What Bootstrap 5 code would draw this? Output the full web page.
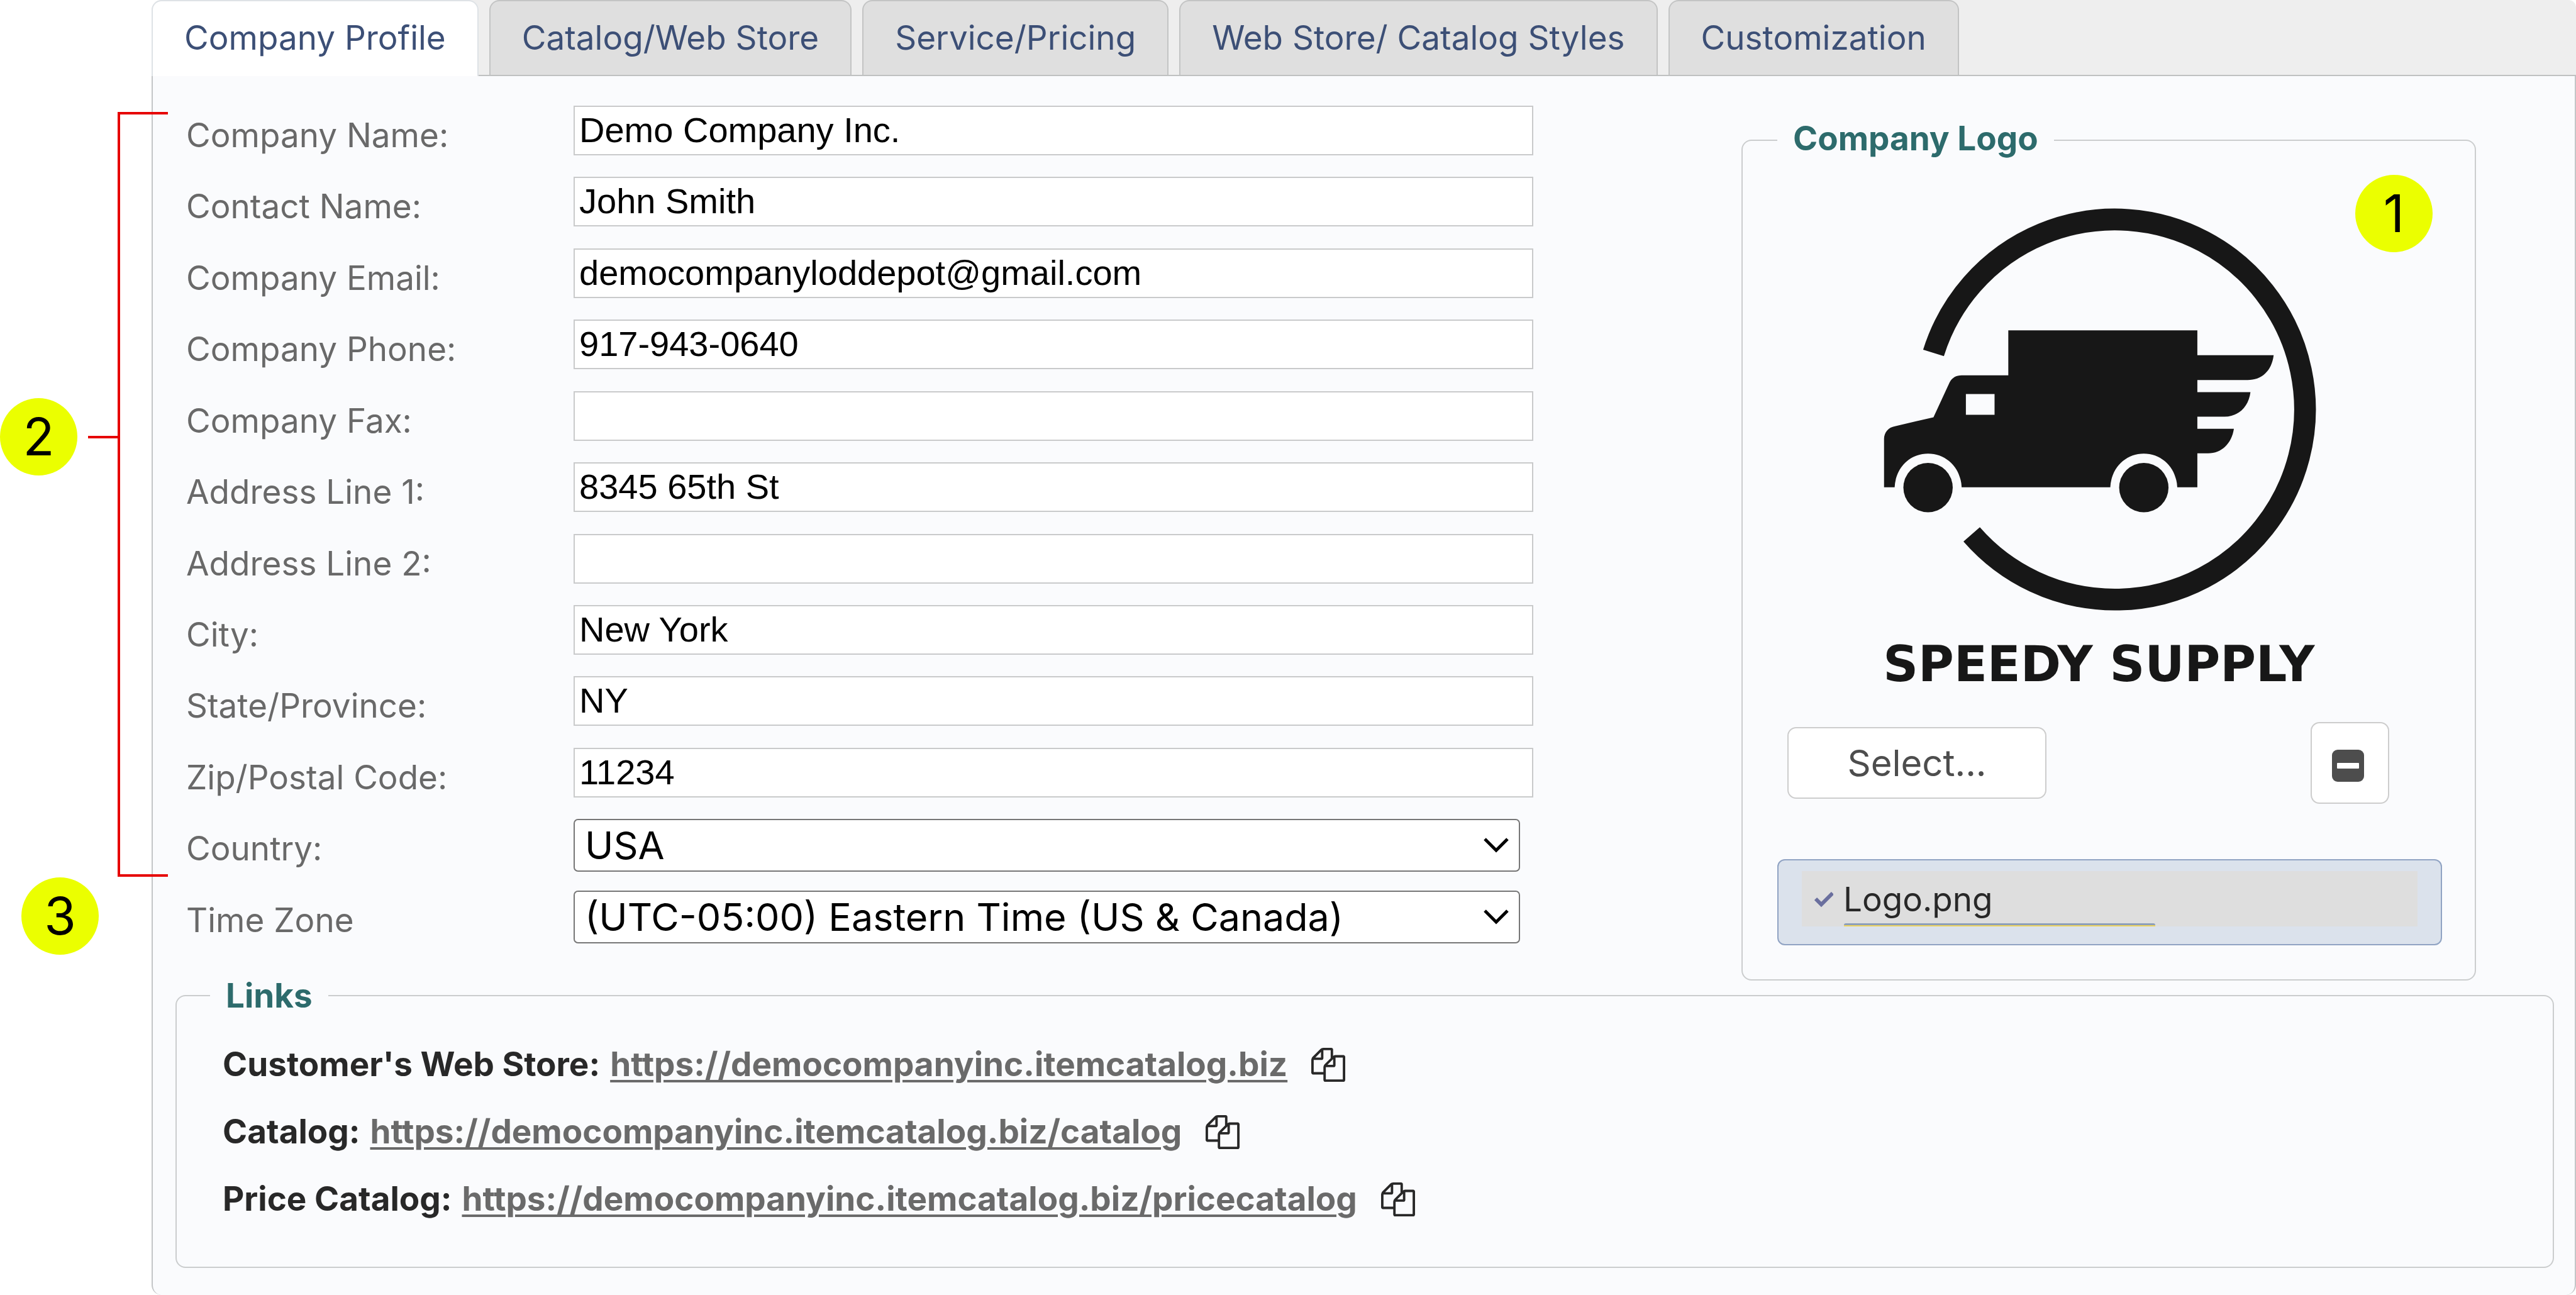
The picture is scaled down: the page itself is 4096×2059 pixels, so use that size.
<!DOCTYPE html>
<html lang="en">
<head>
<meta charset="utf-8">
<meta name="viewport" content="width=device-width, initial-scale=1">
<title>Company Profile</title>
<link href="https://cdn.jsdelivr.net/npm/bootstrap@5.3.0/dist/css/bootstrap.min.css" rel="stylesheet">
<style>
  body { background: #fff; color: #282828; font-family: Inter, "Liberation Sans", sans-serif; font-size: 53px; line-height: 64px; }
  .profile-page { min-height: 100vh; padding-left: 241px; }

  /* tab strip */
  .tab-strip { background: #eee; border-bottom: 2px solid #bfc1c1; border-radius: 16px 12px 0 0; gap: 17px; }
  .tab-strip .nav-link { height: 119px; margin: 0; padding: 26px 50px; border: 2px solid #c3c4c4; border-bottom: 0; border-radius: 16px 16px 0 0; background: #dfdfdf; color: #3c4f76; line-height: 64px; }
  .tab-strip .nav-link.active { height: 123px; margin-bottom: -4px; background: #fff; color: #3c4f76; }

  .profile-panel { background: #fafbfd; border: 2px solid #c3c5c7; border-top: 0; border-bottom: 0; border-radius: 0 0 16px 16px; padding-bottom: 36px; }

  /* form */
  .details-form { padding: 47px 331px 30px 53px; }
  .field-row { flex: 1 1 0; }
  .field-label { width: 616px; padding-top: 15px; color: #696969; line-height: 64px; }
  .field-text { height: 79px; padding: 0 7px 2px; border: 2px solid #c9cacb; border-radius: 0; background: #fff; color: #000; font-family: "Liberation Sans", sans-serif; font-size: 56px; line-height: 64px; }
  .field-pick { height: 84px; margin-right: 21px; padding: 0 80px 0 16px; border: 2px solid #767676; border-radius: 7px; color: #000; font-size: 61px; line-height: 76px;
    background: #fff url("data:image/svg+xml,%3Csvg xmlns='http://www.w3.org/2000/svg' viewBox='0 0 40 24' fill='none' stroke='%23000' stroke-width='5'%3E%3Cpath d='M2 2l18 18L38 2'/%3E%3C/svg%3E") no-repeat right 16px center / 40px 24px; }

  /* framed groups */
  .framed { margin: 0; border: 2px solid #cbcdce; border-radius: 16px; }
  .framed legend { float: none; width: auto; margin: 0; padding: 0 25px; color: #2d6b6c; font-size: 53px; font-weight: 700; line-height: 64px; }

  .logo-column { flex: 0 0 1168px; margin: 67px 157px 0 0; }
  .logo-box { padding: 0 52px 54px 55px; }
  .logo-box legend { padding-bottom: 6px; }
  .logo-art { display: block; width: 729px; height: 794px; margin: 50px auto 46px 145px; }
  .tool-row { padding: 0 84px 0 16px; }
  .tool-btn { background: #fff; border: 2px solid #cdcdcd; border-radius: 14px; color: #4d4d4d; font-size: 58px; line-height: 64px; }
  .tool-btn:hover { background: #f4f4f4; border-color: #bbb; }
  .pick-btn { width: 412px; height: 114px; padding: 0; }
  .drop-btn { width: 125px; height: 130px; padding: 8px 6px 0 0; }
  .file-item { margin-top: 88px; padding: 17px 37px 28px; background: #dbe2ec; border: 2px solid #90a3c3; border-radius: 12px; }
  .file-name { background: #dedede; padding: 13px 0 0 20px; }
  .file-bar { width: 495px; height: 5px; margin: 6px 0 0 47px; border-top: 3px solid #8d9fb9; border-radius: 3px 3px 0 0; background: #edd35f; }

  /* links */
  .links-wrap { margin: -8px 33px 0 36px; }
  .links-box { padding: 0 53px 54px; }
  .links-list { margin: 24px 0 0 20px; font-weight: 700; line-height: 107px; }
  .links-list a { color: #6a6a6a; text-decoration: underline; text-decoration-thickness: 4px; text-underline-offset: 6px; margin-left: 16px; }
  .copy-btn { width: 54px; height: 54px; margin-left: 38px; color: #282828; line-height: 0; }

  /* numbered call-outs */
  .callout-dot { position: absolute; width: 123px; height: 123px; border-radius: 50%; background: #ebff00; color: #000; font-size: 82px; line-height: 123px; text-align: center; }
  .dot-one { top: 90px; right: 69px; }
  .dot-two { top: 633px; left: 0; }
  .dot-three { top: 1395px; left: 34px; }
  .bracket { position: absolute; top: 178px; left: 187px; width: 80px; height: 1216px; border: 4px solid #e60000; border-right: 0; }
  .bracket-tick { position: absolute; top: 693px; left: 140px; width: 48px; height: 4px; background: #e60000; }
</style>
</head>
<body>
<main class="profile-page position-relative d-flex flex-column">
  <ul class="nav nav-tabs tab-strip flex-nowrap">
    <li class="nav-item"><a class="nav-link active" aria-current="page" href="#profile">Company Profile</a></li>
    <li class="nav-item"><a class="nav-link" href="#catalog">Catalog/Web Store</a></li>
    <li class="nav-item"><a class="nav-link" href="#service">Service/Pricing</a></li>
    <li class="nav-item"><a class="nav-link" href="#styles">Web Store/ Catalog Styles</a></li>
    <li class="nav-item"><a class="nav-link" href="#custom">Customization</a></li>
  </ul>

  <section class="profile-panel flex-grow-1" id="profile">
    <div class="d-flex">
      <form class="details-form flex-grow-1 d-flex flex-column">
        <div class="field-row d-flex align-items-start"><label class="field-label flex-shrink-0" for="cname">Company Name:</label><input class="form-control field-text" id="cname" type="text" value="Demo Company Inc."></div>
        <div class="field-row d-flex align-items-start"><label class="field-label flex-shrink-0" for="contact">Contact Name:</label><input class="form-control field-text" id="contact" type="text" value="John Smith"></div>
        <div class="field-row d-flex align-items-start"><label class="field-label flex-shrink-0" for="email">Company Email:</label><input class="form-control field-text" id="email" type="email" value="democompanyloddepot@gmail.com"></div>
        <div class="field-row d-flex align-items-start"><label class="field-label flex-shrink-0" for="phone">Company Phone:</label><input class="form-control field-text" id="phone" type="tel" value="917-943-0640"></div>
        <div class="field-row d-flex align-items-start"><label class="field-label flex-shrink-0" for="fax">Company Fax:</label><input class="form-control field-text" id="fax" type="tel"></div>
        <div class="field-row d-flex align-items-start"><label class="field-label flex-shrink-0" for="addr1">Address Line 1:</label><input class="form-control field-text" id="addr1" type="text" value="8345 65th St"></div>
        <div class="field-row d-flex align-items-start"><label class="field-label flex-shrink-0" for="addr2">Address Line 2:</label><input class="form-control field-text" id="addr2" type="text"></div>
        <div class="field-row d-flex align-items-start"><label class="field-label flex-shrink-0" for="city">City:</label><input class="form-control field-text" id="city" type="text" value="New York"></div>
        <div class="field-row d-flex align-items-start"><label class="field-label flex-shrink-0" for="state">State/Province:</label><input class="form-control field-text" id="state" type="text" value="NY"></div>
        <div class="field-row d-flex align-items-start"><label class="field-label flex-shrink-0" for="zip">Zip/Postal Code:</label><input class="form-control field-text" id="zip" type="text" value="11234"></div>
        <div class="field-row d-flex align-items-start"><label class="field-label flex-shrink-0" for="country">Country:</label><select class="form-select field-pick" id="country"><option>USA</option></select></div>
        <div class="field-row d-flex align-items-start"><label class="field-label flex-shrink-0" for="zone">Time Zone</label><select class="form-select field-pick" id="zone"><option>(UTC-05:00) Eastern Time (US &amp; Canada)</option></select></div>
      </form>

      <div class="logo-column position-relative">
        <fieldset class="framed logo-box">
          <legend>Company Logo</legend>
          <svg class="logo-art" viewBox="0 0 780 850" role="img" aria-label="Speedy Supply logo" fill="#171717">
            <path d="M110.5 271A323.500 323.500 0 1 1 175.400 579.800" fill="none" stroke="#171717" stroke-width="37"/>
            <path fill-rule="evenodd" d="M237.800 232.600H559.600V274.800H689.500C686 302 669 317.100 645 317.100H559.600V337.700H650C647 363 629 379.500 606 379.500H559.600V400H621.800C618 425 601 441.800 578 441.800H559.600V499.800H525.400C524 466 499 442.300 468.400 442.300S413 466 411.400 499.800H158.400C157 466 132 442.300 101.200 442.300S46 466 44.300 499.800H26.300V417C26.500 406 34 397.500 44.800 395.700L110.400 380.500L138 321C142 313 149 309 158.500 309H237.800ZM165.600 341V376.200H214.400V341Z"/>
            <circle cx="101.200" cy="500.300" r="42"/><circle cx="468.500" cy="500.300" r="42"/>
            <text x="392" y="830" text-anchor="middle" font-family="DejaVu Sans, sans-serif" font-weight="700" font-size="83">SPEEDY SUPPLY</text>
          </svg>
          <div class="tool-row d-flex justify-content-between align-items-center">
            <button type="button" class="btn tool-btn pick-btn">Select...</button>
            <button type="button" class="btn tool-btn drop-btn d-flex justify-content-center align-items-center" aria-label="Remove">
              <svg width="51" height="51" viewBox="0 0 51 51"><rect width="51" height="51" rx="9" fill="#4d4d4d"/><rect x="8" y="21" width="35" height="9" rx="1" fill="#fff"/></svg>
            </button>
          </div>
          <div class="file-item">
            <div class="file-name">
              <div class="d-flex align-items-center">
                <svg width="30" height="30" viewBox="0 0 30 30" fill="none" stroke="#6a6f9e" stroke-width="6"><path d="M2 14l9 9L29 5"/></svg>
                <span class="ms-3">Logo.png</span>
              </div>
              <div class="file-bar"></div>
            </div>
          </div>
        </fieldset>
        <span class="callout-dot dot-one">1</span>
      </div>
    </div>

    <div class="links-wrap">
      <fieldset class="framed links-box">
        <legend>Links</legend>
        <div class="links-list">
          <div class="d-flex align-items-center"><span>Customer's Web Store:</span><a href="#store">https://democompanyinc.itemcatalog.biz</a><button type="button" class="btn p-0 border-0 copy-btn" aria-label="Copy web store link"><svg width="54" height="54" viewBox="0 0 1792 1792" fill="currentColor"><path d="M1696 384q40 0 68 28t28 68v1216q0 40-28 68t-68 28h-960q-40 0-68-28t-28-68v-288h-544q-40 0-68-28t-28-68v-672q0-40 20-88t48-76l408-408q28-28 76-48t88-20h416q40 0 68 28t28 68v328q68-40 128-40h416zm-544 213l-299 299h299v-299zm-640-384l-299 299h299v-299zm196 647l316-316v-416h-384v416q0 40-28 68t-68 28h-416v640h512v-256q0-40 20-88t48-76zm956 804v-1152h-384v416q0 40-28 68t-68 28h-416v640h896z"/></svg></button></div>
          <div class="d-flex align-items-center"><span>Catalog:</span><a href="#cat">https://democompanyinc.itemcatalog.biz/catalog</a><button type="button" class="btn p-0 border-0 copy-btn" aria-label="Copy catalog link"><svg width="54" height="54" viewBox="0 0 1792 1792" fill="currentColor"><path d="M1696 384q40 0 68 28t28 68v1216q0 40-28 68t-68 28h-960q-40 0-68-28t-28-68v-288h-544q-40 0-68-28t-28-68v-672q0-40 20-88t48-76l408-408q28-28 76-48t88-20h416q40 0 68 28t28 68v328q68-40 128-40h416zm-544 213l-299 299h299v-299zm-640-384l-299 299h299v-299zm196 647l316-316v-416h-384v416q0 40-28 68t-68 28h-416v640h512v-256q0-40 20-88t48-76zm956 804v-1152h-384v416q0 40-28 68t-68 28h-416v640h896z"/></svg></button></div>
          <div class="d-flex align-items-center"><span>Price Catalog:</span><a href="#price">https://democompanyinc.itemcatalog.biz/pricecatalog</a><button type="button" class="btn p-0 border-0 copy-btn" aria-label="Copy price catalog link"><svg width="54" height="54" viewBox="0 0 1792 1792" fill="currentColor"><path d="M1696 384q40 0 68 28t28 68v1216q0 40-28 68t-68 28h-960q-40 0-68-28t-28-68v-288h-544q-40 0-68-28t-28-68v-672q0-40 20-88t48-76l408-408q28-28 76-48t88-20h416q40 0 68 28t28 68v328q68-40 128-40h416zm-544 213l-299 299h299v-299zm-640-384l-299 299h299v-299zm196 647l316-316v-416h-384v416q0 40-28 68t-68 28h-416v640h512v-256q0-40 20-88t48-76zm956 804v-1152h-384v416q0 40-28 68t-68 28h-416v640h896z"/></svg></button></div>
        </div>
      </fieldset>
    </div>
  </section>

  <span class="callout-dot dot-two">2</span>
  <span class="callout-dot dot-three">3</span>
  <span class="bracket"></span>
  <span class="bracket-tick"></span>
</main>
<script src="https://cdn.jsdelivr.net/npm/bootstrap@5.3.0/dist/js/bootstrap.bundle.min.js"></script>
</body>
</html>
